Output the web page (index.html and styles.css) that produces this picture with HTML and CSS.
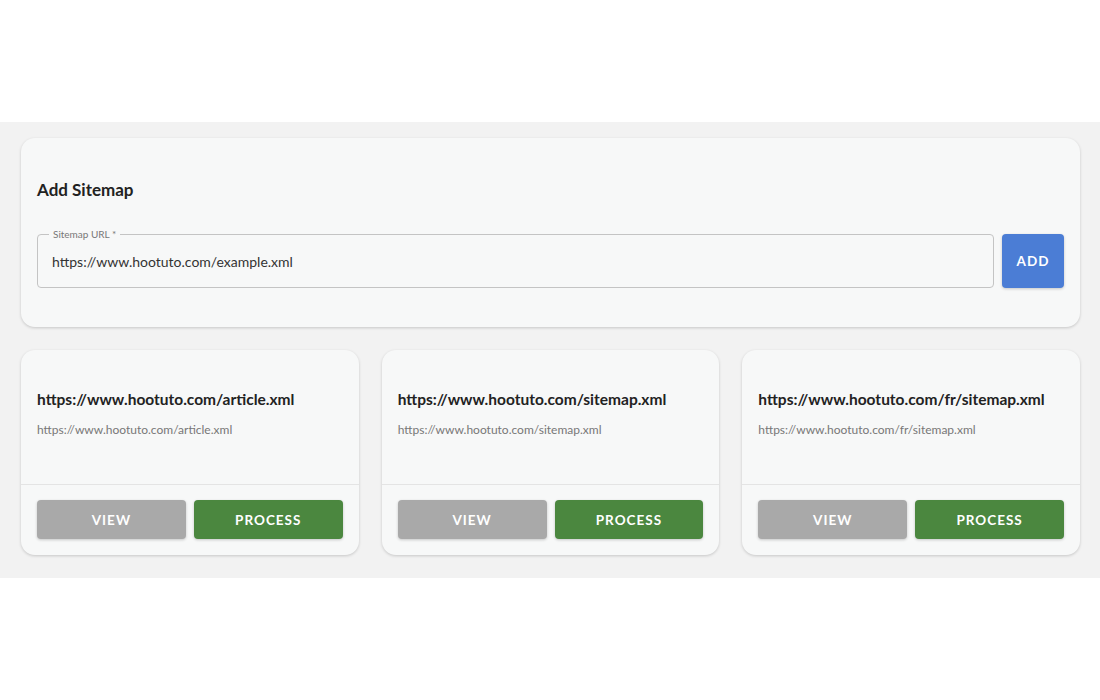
FILE: index.html
```html
<!DOCTYPE html>
<html lang="en">
<head>
    <meta charset="UTF-8">
    <meta name="viewport" content="width=device-width, initial-scale=1.0">
    <title>Sitemaps</title>
    <link rel="stylesheet" href="styles.css">
</head>
<body>
    <div class="top-space"></div>

    <div class="main">
        <div class="card add-card">
            <h2 class="add-title">Add Sitemap</h2>
            <div class="add-row">
                <div class="field">
                    <span class="field-label">Sitemap URL *</span>
                    <div class="field-value">https://www.hootuto.com/example.xml</div>
                </div>
                <button class="btn btn-add">ADD</button>
            </div>
        </div>

        <div class="sitemap-list">
            <div class="card sitemap-card">
                <div class="sitemap-body">
                    <div class="sitemap-title">https://www.hootuto.com/article.xml</div>
                    <div class="sitemap-url">https://www.hootuto.com/article.xml</div>
                </div>
                <div class="sitemap-actions">
                    <button class="btn btn-view">VIEW</button>
                    <button class="btn btn-process">PROCESS</button>
                </div>
            </div>
            <div class="card sitemap-card">
                <div class="sitemap-body">
                    <div class="sitemap-title">https://www.hootuto.com/sitemap.xml</div>
                    <div class="sitemap-url">https://www.hootuto.com/sitemap.xml</div>
                </div>
                <div class="sitemap-actions">
                    <button class="btn btn-view">VIEW</button>
                    <button class="btn btn-process">PROCESS</button>
                </div>
            </div>
            <div class="card sitemap-card">
                <div class="sitemap-body">
                    <div class="sitemap-title">https://www.hootuto.com/fr/sitemap.xml</div>
                    <div class="sitemap-url">https://www.hootuto.com/fr/sitemap.xml</div>
                </div>
                <div class="sitemap-actions">
                    <button class="btn btn-view">VIEW</button>
                    <button class="btn btn-process">PROCESS</button>
                </div>
            </div>
        </div>
    </div>
</body>
</html>
```

FILE: styles.css
```css
body {
    font-family: Lato, "Open Sans", sans-serif;
    margin: 0;
    padding: 0;
    background-color: #ffffff;
    color: #222;
}
.top-space {
    height: 122px;
}
.main {
    background-color: #f2f2f2;
    padding: 16px 20px 23px 21px;
}
.card {
    background-color: #f7f8f8;
    border-radius: 14px;
    box-shadow: 0 1px 3px rgba(0, 0, 0, 0.18);
}

/* Add sitemap card */
.add-card {
    padding: 38px 16px 39px 16px;
}
.add-title {
    font-size: 17px;
    font-weight: 700;
    line-height: 28px;
    margin: 0 0 30px 0;
    color: #222;
}
.add-row {
    display: flex;
    gap: 8px;
}
.field {
    flex: 1;
    position: relative;
    height: 54px;
    box-sizing: border-box;
    border: 1px solid #c4c4c4;
    border-radius: 4px;
    display: flex;
    align-items: center;
    padding-left: 14px;
}
.field-label {
    position: absolute;
    top: -7px;
    left: 11px;
    padding: 0 4px;
    font-size: 10px;
    line-height: 12px;
    color: #777;
    background-color: #f7f8f8;
}
.field-value {
    font-size: 14px;
    color: #333;
}
.btn {
    font-family: Lato, "Open Sans", sans-serif;
    border: none;
    border-radius: 4px;
    color: white;
    font-weight: 700;
    font-size: 13.5px;
    letter-spacing: 1px;
    cursor: pointer;
    box-shadow: 0 1px 3px rgba(0, 0, 0, 0.2);
}
.btn-add {
    width: 62px;
    height: 54px;
    background-color: #4b7dd5;
}

/* Sitemap cards */
.sitemap-list {
    display: grid;
    grid-template-columns: repeat(3, 1fr);
    gap: 23px;
    margin-top: 23px;
}
.sitemap-body {
    padding: 38px 16px 46px 16px;
    border-bottom: 1px solid #e4e4e4;
}
.sitemap-title {
    font-size: 15.5px;
    font-weight: 700;
    line-height: 22px;
    color: #222;
}
.sitemap-url {
    font-size: 12px;
    line-height: 16px;
    margin-top: 12px;
    color: #777;
}
.sitemap-actions {
    display: flex;
    gap: 8px;
    padding: 15px 16px 16px 16px;
}
.sitemap-actions .btn {
    flex: 1;
    height: 39px;
}
.btn-view {
    background-color: #a9a9a9;
}
.btn-process {
    background-color: #4b873f;
}
```
